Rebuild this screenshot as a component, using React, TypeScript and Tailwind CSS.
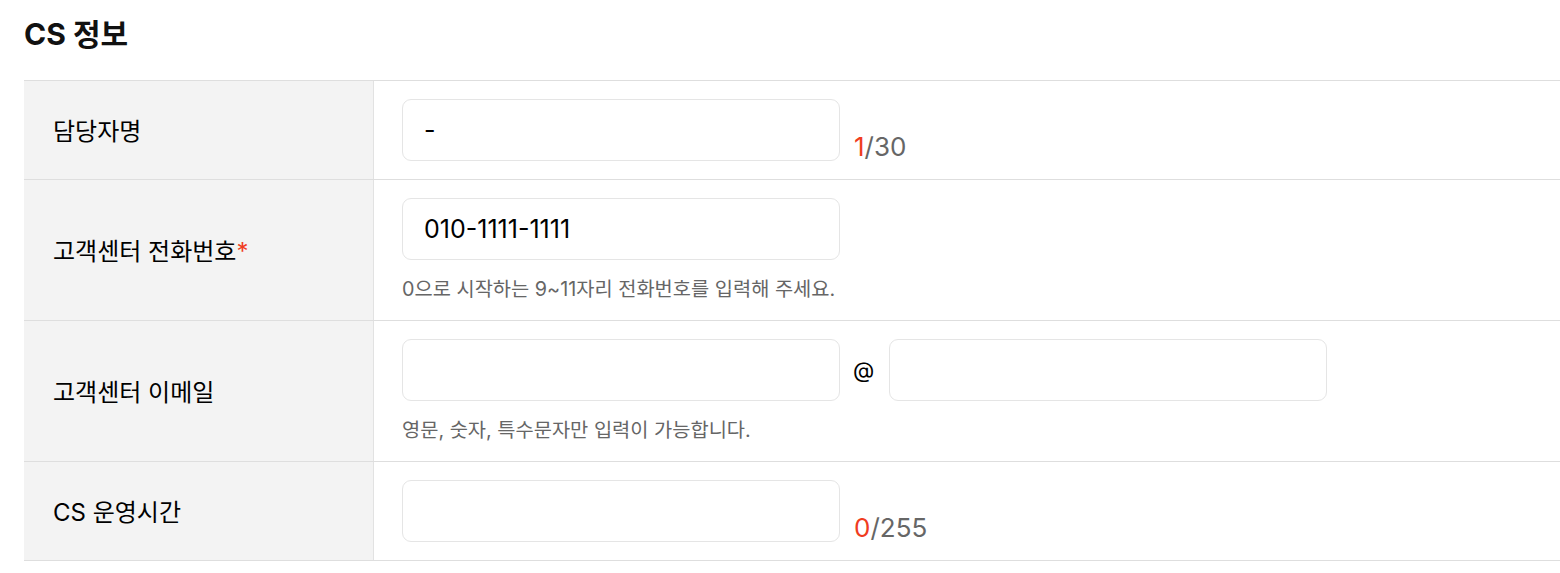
import React from 'react'

const font = { fontFamily: 'Inter, "Noto Sans CJK KR", sans-serif' }

const Label = ({ children }: { children: React.ReactNode }) => (
  <div className="w-[350px] shrink-0 bg-[#f3f3f3] border-r border-[#e2e2e2] flex items-center pl-[29px] pt-[4px] text-[24px] text-[#000] font-normal">
    {children}
  </div>
)

const Input = ({ value = '' }: { value?: string }) => (
  <div className="w-[438px] h-[62px] rounded-[9px] border border-[#e5e5e5] bg-white flex items-center px-[21px] pt-[2px] text-[25px] text-[#000]">
    {value}
  </div>
)

const Counter = ({ n, max }: { n: number; max: number }) => (
  <div className="ml-[14px] mb-[1px] text-[26px] leading-[26px] text-[#666]">
    <span className="text-[#f03c1e]">{n}</span>/{max}
  </div>
)

const Help = ({ children }: { children: React.ReactNode }) => (
  <div className="mt-[17px] text-[19.8px] leading-[24px] text-[#666]">{children}</div>
)

export default function App() {
  return (
    <div className="w-[1560px] h-[573px] bg-white px-[24px]" style={font}>
      <h1 className="h-[80px] pt-[16px] text-[30px] font-bold text-[#111] leading-[36px]">CS 정보</h1>
      <div className="border-t border-[#dedede] mr-[-24px]">
        <div className="flex border-b border-[#dedede]">
          <Label>담당자명</Label>
          <div className="pl-[28px] py-[18px] flex items-end">
            <Input value="-" />
            <Counter n={1} max={30} />
          </div>
        </div>
        <div className="flex border-b border-[#dedede]">
          <Label>
            고객센터 전화번호<span className="text-[#f03c1e]">*</span>
          </Label>
          <div className="pl-[28px] pt-[18px] pb-[19px]">
            <Input value="010-1111-1111" />
            <Help>0으로 시작하는 9~11자리 전화번호를 입력해 주세요.</Help>
          </div>
        </div>
        <div className="flex border-b border-[#dedede]">
          <Label>고객센터 이메일</Label>
          <div className="pl-[28px] pt-[18px] pb-[19px]">
            <div className="flex items-center">
              <Input />
              <span className="ml-[13px] mr-[15px] text-[22px] text-[#000]">@</span>
              <Input />
            </div>
            <Help>영문, 숫자, 특수문자만 입력이 가능합니다.</Help>
          </div>
        </div>
        <div className="flex border-b border-[#dedede]">
          <Label>CS 운영시간</Label>
          <div className="pl-[28px] py-[18px] flex items-end">
            <Input />
            <Counter n={0} max={255} />
          </div>
        </div>
      </div>
    </div>
  )
}
